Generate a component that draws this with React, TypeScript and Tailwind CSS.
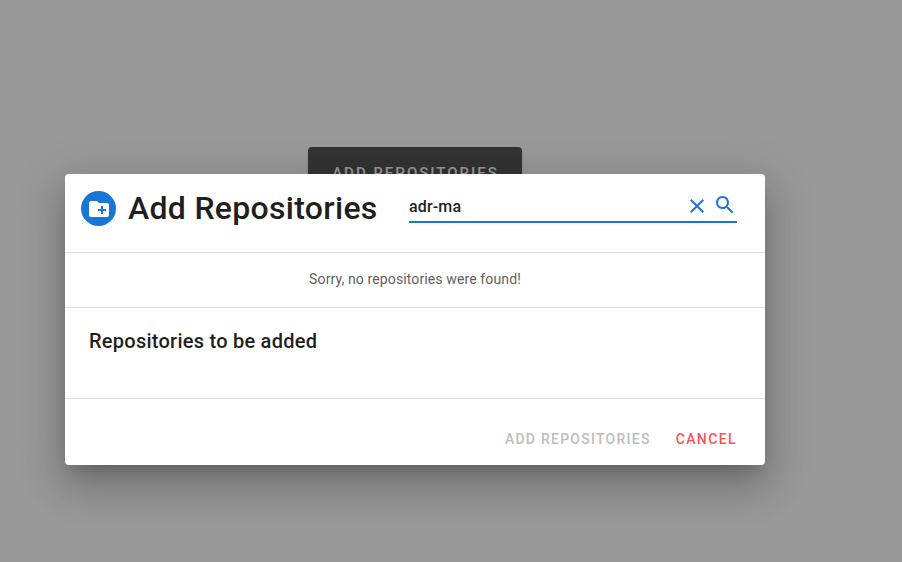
export default function App() {
  return (
    <div className="w-[902px] h-[562px] bg-white relative overflow-hidden font-['Roboto',sans-serif]">
      <div className="w-[830px] flex justify-center pt-[147px]">
        <button className="w-[214px] h-[52px] rounded bg-[#555555] text-white text-[15px] font-medium tracking-[2px] pl-[1px] shadow-md">ADD REPOSITORIES</button>
      </div>
      <div className="absolute inset-0 bg-black/40 pt-[174px]">
        <div className="ml-[65px] w-[700px] h-[291px] bg-white rounded shadow-[0_11px_15px_-7px_rgba(0,0,0,0.2),0_24px_38px_3px_rgba(0,0,0,0.14),0_9px_46px_8px_rgba(0,0,0,0.12)] flex flex-col">
          <div className="h-[79px] border-b border-[#e0e0e0] flex items-start">
            <div className="ml-4 mt-[17px] w-[35px] h-[35px] rounded-full bg-[#1976d2] flex items-center justify-center">
              <svg width="24" height="24" viewBox="0 0 24 24" fill="white"><path d="M20 6h-8l-2-2H4c-1.11 0-1.99.89-1.99 2L2 18c0 1.11.89 2 2 2h16c1.11 0 2-.89 2-2V8c0-1.11-.89-2-2-2zm-1 8h-3v3h-2v-3h-3v-2h3V9h2v3h3v2z"/></svg>
            </div>
            <div className="ml-[12px] mt-[13px] w-[249px] whitespace-nowrap text-[32px] leading-[42px] font-medium text-[#1f1f1f] tracking-[0.3px]">Add Repositories</div>
            <div className="ml-[32px] mt-[16px] w-[328px] h-[33px] border-b-2 border-[#1976d2] flex items-center">
              <span className="text-base font-medium text-[#1f1f1f] flex-1 tracking-[0.15px] pt-[2px]">adr-ma</span>
              <svg width="24" height="24" viewBox="0 0 24 24" fill="#1976d2"><path d="M19 6.41L17.59 5 12 10.59 6.41 5 5 6.41 10.59 12 5 17.59 6.41 19 12 13.41 17.59 19 19 17.59 13.41 12z"/></svg>
              <svg className="ml-[4px] -mt-[2px]" width="24" height="24" viewBox="0 0 24 24" fill="#1976d2"><path d="M15.5 14h-.79l-.28-.27C15.41 12.59 16 11.11 16 9.5 16 5.91 13.09 3 9.5 3S3 5.91 3 9.5 5.91 16 9.5 16c1.61 0 3.09-.59 4.23-1.57l.27.28v.79l5 4.99L20.49 19l-4.99-5zm-6 0C7.01 14 5 11.99 5 9.5S7.01 5 9.5 5 14 7.01 14 9.5 11.99 14 9.5 14z"/></svg>
            </div>
          </div>
          <div className="h-[55px] border-b border-[#e0e0e0] flex items-center justify-center text-sm text-[#5f5f5f] tracking-[0.12px] pb-[2px]">Sorry, no repositories were found!</div>
          <div className="h-[91px] border-b border-[#e0e0e0] px-6 pt-[19px]">
            <div className="text-xl leading-[28px] font-medium text-[#1f1f1f] tracking-[0.25px]">Repositories to be added</div>
          </div>
          <div className="flex-1 flex items-center justify-end pr-[28px] pt-[13px] gap-[25px] text-sm font-medium tracking-[1.25px]">
            <span className="text-[#bdbdbd]">ADD REPOSITORIES</span>
            <span className="text-[#ff5252] tracking-[1.4px]">CANCEL</span>
          </div>
        </div>
      </div>
    </div>
  );
}
